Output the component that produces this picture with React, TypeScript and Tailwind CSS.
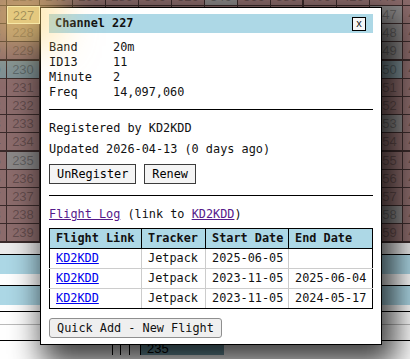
import React from "react";

const ROWS = [226, 227, 228, 229, 230, 231, 232, 233, 234, 235, 236, 237, 238, 239];
const COLS = [0, 1, 2, 3, 4, 5, 6, 7, 8, 9, 10, 11, 12, 13];

const GRAY = new Set(["7-226", "1-235", "12-227", "12-228", "12-229", "12-233", "12-238"]);
const BLUE = new Set(["0-230", "1-230", "12-230"]);

const flights = [
  { tracker: "Jetpack", start: "2025-06-05", end: "" },
  { tracker: "Jetpack", start: "2023-11-05", end: "2025-06-04" },
  { tracker: "Jetpack", start: "2023-11-05", end: "2024-05-17" },
];

// cells sitting under the dialog are never seen
const hidden = (col: number, row: number) => col >= 2 && col <= 11 && row >= 227;

function cellClass(col: number, row: number) {
  const key = `${col}-${row}`;
  const thickB = row === 229 || row === 234 || row === 239;
  const thickR = col === 9;
  let bg = "bg-[#8c6c6c]";
  if (GRAY.has(key)) bg = "bg-[#8b8888]";
  if (BLUE.has(key)) bg = "bg-[#7d8f95]";
  if (key === "1-227") bg = "bg-[#e4c97f] relative z-10 border border-[#f6e7a6] shadow-[0_0_36px_22px_rgba(255,214,110,0.5)] text-[#2a2418]";
  if (key === "1-228") bg = "bg-[#a68b72]";
  return [
    "w-[33px] shrink-0 text-center text-[13px] leading-[17px] text-black/30 border-[#3b2b2b]",
    thickB ? "h-[19px] border-b-2" : "h-[18px] border-b",
    thickR ? "border-r-2" : "border-r",
    bg,
  ].join(" ");
}

function Btn({ children }: { children: React.ReactNode }) {
  return (
    <button className="h-[20px] px-[7px] border border-[#3c3c3c] bg-[#f4f4f4] text-black leading-[18px]">
      {children}
    </button>
  );
}

export default function App() {
  return (
    <div className="relative w-[410px] h-[359px] overflow-hidden bg-white font-['Liberation_Sans',sans-serif]">
      {/* page behind the dialog */}
      <div className="ml-[-26px] mt-[-12px] w-[462px]">
        {ROWS.map((row) => (
          <div key={row} className="flex">
            {COLS.map((col) => (
              <div key={col} className={cellClass(col, row)}>
                {hidden(col, row) ? "" : row + 20 * (col - 1)}
              </div>
            ))}
          </div>
        ))}
      </div>
      <div className="h-[12px] bg-[#ececec] border-b border-black" />
      <div className="h-[19px] bg-[#add8e6]" />
      <div className="h-[12px] bg-white border-b border-black" />
      <div className="h-[19px] bg-[#add8e6]" />
      <div className="h-[7px] bg-white border-b border-black" />
      <div className="h-[13px] bg-white border-b border-[#bbbbbb]" />
      <div className="flex h-[15px] mt-[15px] pl-[112px] border-t border-black">
        <div className="w-[8px] border-l border-black" />
        <div className="w-[9px] border-l border-black" />
        <div className="w-[11px] border-l border-black" />
        <div className="w-[84px] border-l border-black bg-[#6d9aa7] text-[13px] leading-[15px] pl-[6px]">235</div>
      </div>

      {/* dialog */}
      <div className="absolute left-[40px] top-[7px] w-[342px] bg-white border border-black px-[8px] pt-[6px] pb-[6px] shadow-[8px_14px_30px_6px_rgba(0,0,0,0.75)] font-['DejaVu_Sans_Mono',monospace] text-[11.85px] leading-[15px] text-[#111]">
        <div className="h-[19px] bg-[#add8e6] flex items-center justify-between pl-[6px] pr-[7px]">
          <span className="font-bold">Channel 227</span>
          <button className="w-[14px] h-[14px] border border-black bg-[#f6f6f6] text-[10px] leading-[11px] flex items-center justify-center">
            x
          </button>
        </div>

        <div className="mt-[7px] grid grid-cols-[64px_1fr]">
          <span>Band</span>
          <span>20m</span>
          <span>ID13</span>
          <span>11</span>
          <span>Minute</span>
          <span>2</span>
          <span>Freq</span>
          <span>14,097,060</span>
        </div>

        <hr className="mt-[9px] border-t border-black" />

        <p className="mt-[11px]">Registered by KD2KDD</p>
        <p className="mt-[6px]">Updated 2026-04-13 (0 days ago)</p>
        <div className="mt-[7px] flex gap-[8px]">
          <Btn>UnRegister</Btn>
          <Btn>Renew</Btn>
        </div>

        <hr className="mt-[11px] border-t border-black" />

        <p className="mt-[11px]">
          <a href="#" className="text-[#551a8b] underline">Flight Log</a> (link to{" "}
          <a href="#" className="text-[#551a8b] underline">KD2KDD</a>)
        </p>

        <table className="mt-[6px] w-full table-fixed border-collapse border border-black">
          <thead>
            <tr className="h-[20px] bg-[#add8e6] text-left">
              <th className="w-[92px] border border-black pl-[6px] font-bold">Flight Link</th>
              <th className="w-[64px] border border-black pl-[6px] font-bold">Tracker</th>
              <th className="w-[83px] border border-black pl-[6px] font-bold">Start Date</th>
              <th className="border border-black pl-[6px] font-bold">End Date</th>
            </tr>
          </thead>
          <tbody>
            {flights.map((f, i) => (
              <tr key={i} className="group h-[20px]">
                <td className="border border-[#cccccc] border-l-black group-last:border-b-black pl-[6px]">
                  <a href="#" className="text-[#0000ee] underline">KD2KDD</a>
                </td>
                <td className="border border-[#cccccc] group-last:border-b-black pl-[6px]">{f.tracker}</td>
                <td className="border border-[#cccccc] group-last:border-b-black pl-[6px]">{f.start}</td>
                <td className="border border-[#cccccc] border-r-black group-last:border-b-black pl-[6px]">{f.end}</td>
              </tr>
            ))}
          </tbody>
        </table>

        <button className="mt-[9px] h-[20px] px-[7px] border border-[#8f8f8f] rounded-[3px] bg-[#efefef] leading-[18px]">
          Quick Add - New Flight
        </button>
      </div>
    </div>
  );
}
